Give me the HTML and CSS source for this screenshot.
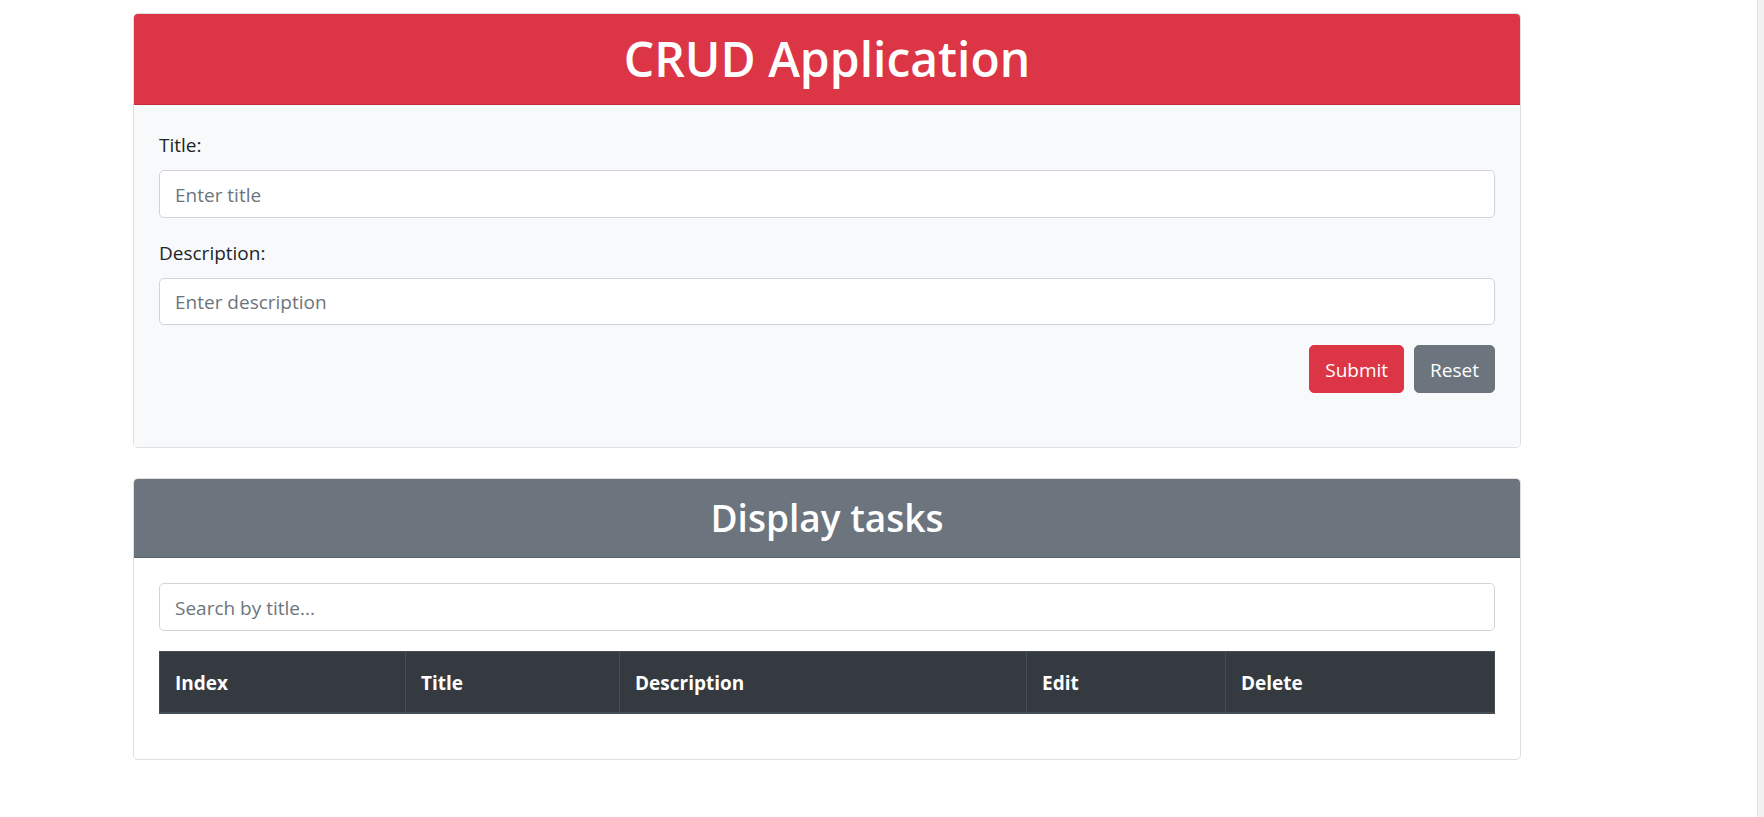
FILE: index.html
```html
<!DOCTYPE html>
<html lang="en">
<head>
<meta charset="utf-8">
<title>CRUD Application</title>
<link rel="stylesheet" href="styles.css">
</head>
<body>
<div class="window">
  <main class="page">
    <section class="card card-form">
      <header class="card-header header-danger">
        <h1 class="card-title-lg">CRUD Application</h1>
      </header>
      <div class="card-body body-light">
        <form class="task-form">
          <div class="form-group">
            <label class="form-label" for="title">Title:</label>
            <input class="form-control" id="title" type="text" placeholder="Enter title">
          </div>
          <div class="form-group">
            <label class="form-label" for="desc">Description:</label>
            <input class="form-control" id="desc" type="text" placeholder="Enter description">
          </div>
          <div class="form-actions">
            <button type="button" class="btn btn-danger">Submit</button>
            <button type="button" class="btn btn-secondary">Reset</button>
          </div>
        </form>
      </div>
    </section>

    <section class="card card-list">
      <header class="card-header header-secondary">
        <h2 class="card-title-md">Display tasks</h2>
      </header>
      <div class="card-body">
        <input class="form-control search" type="text" placeholder="Search by title...">
        <table class="table-dark">
          <thead>
            <tr>
              <th class="col-index">Index</th>
              <th class="col-title">Title</th>
              <th class="col-desc">Description</th>
              <th class="col-edit">Edit</th>
              <th class="col-delete">Delete</th>
            </tr>
          </thead>
          <tbody></tbody>
        </table>
      </div>
    </section>
  </main>
  <div class="scroll-track"></div>
</div>
</body>
</html>
```

FILE: styles.css
```css
* { box-sizing: border-box; }

html, body {
  margin: 0;
  padding: 0;
  background: #fff;
}

body {
  font-family: "Open Sans", "Noto Sans", "Liberation Sans", sans-serif;
  font-size: 20px;
  line-height: 30px;
  color: #212529;
}

.window {
  display: flex;
  min-height: 100vh;
}

.page {
  flex: 1;
  padding: 13px 0 0 133px;
}

.scroll-track {
  width: 7px;
  flex: 0 0 7px;
  background: #f1f1f1;
  border-left: 1px solid #e2e2e2;
}

.card {
  width: 1388px;
  border: 1px solid rgba(0, 0, 0, 0.125);
  border-radius: 5px;
  background: #fff;
  overflow: hidden;
}

.card-list {
  margin-top: 30px;
}

.card-header {
  padding: 15px 25px;
  border-bottom: 1px solid rgba(0, 0, 0, 0.125);
  color: #fff;
  text-align: center;
}

.header-danger { background: #dc3545; }
.header-secondary { background: #6c757d; }

.card-title-lg {
  margin: 0;
  font-size: 48px;
  line-height: 60px;
  font-weight: 600;
}

.card-title-md {
  margin: 0;
  font-size: 37px;
  line-height: 48px;
  font-weight: 600;
}

.card-body {
  padding: 25px;
}

.body-light { background: #f8f9fa; }

.form-group {
  margin-bottom: 20px;
}

.form-label {
  display: block;
  margin-bottom: 10px;
  padding-top: 1px;
  font-size: 19px;
  line-height: 29px;
}

.form-control {
  display: block;
  width: 100%;
  height: 47.5px;
  padding: 8.5px 15px 6.5px;
  font-family: inherit;
  font-size: 19px;
  line-height: 30px;
  color: #495057;
  background: #fff;
  border: 1px solid #ced4da;
  border-radius: 5px;
  outline: none;
}

.form-control::placeholder {
  color: #6c757d;
  opacity: 1;
}

.form-actions {
  display: flex;
  justify-content: flex-end;
  gap: 10px;
  margin-bottom: 29.5px;
}

.btn {
  height: 47.5px;
  padding: 8.5px 15px 6.5px;
  font-family: inherit;
  font-size: 19px;
  line-height: 30px;
  color: #fff;
  border: 1px solid transparent;
  border-radius: 5px;
  cursor: pointer;
}

.btn-danger { background: #dc3545; border-color: #dc3545; }
.btn-secondary { background: #6c757d; border-color: #6c757d; }

.search {
  margin-bottom: 20px;
}

.table-dark {
  width: 100%;
  table-layout: fixed;
  border-collapse: collapse;
  margin-bottom: 20px;
  background: #343a40;
  color: #fff;
}

.table-dark th {
  padding: 16px 15px 14px;
  text-align: left;
  font-size: 19px;
  line-height: 30px;
  font-weight: 700;
  border: 1px solid #454d55;
  border-bottom-width: 2px;
}

.col-index { width: 246px; }
.col-title { width: 214px; }
.col-desc { width: 407px; }
.col-edit { width: 199px; }
```
